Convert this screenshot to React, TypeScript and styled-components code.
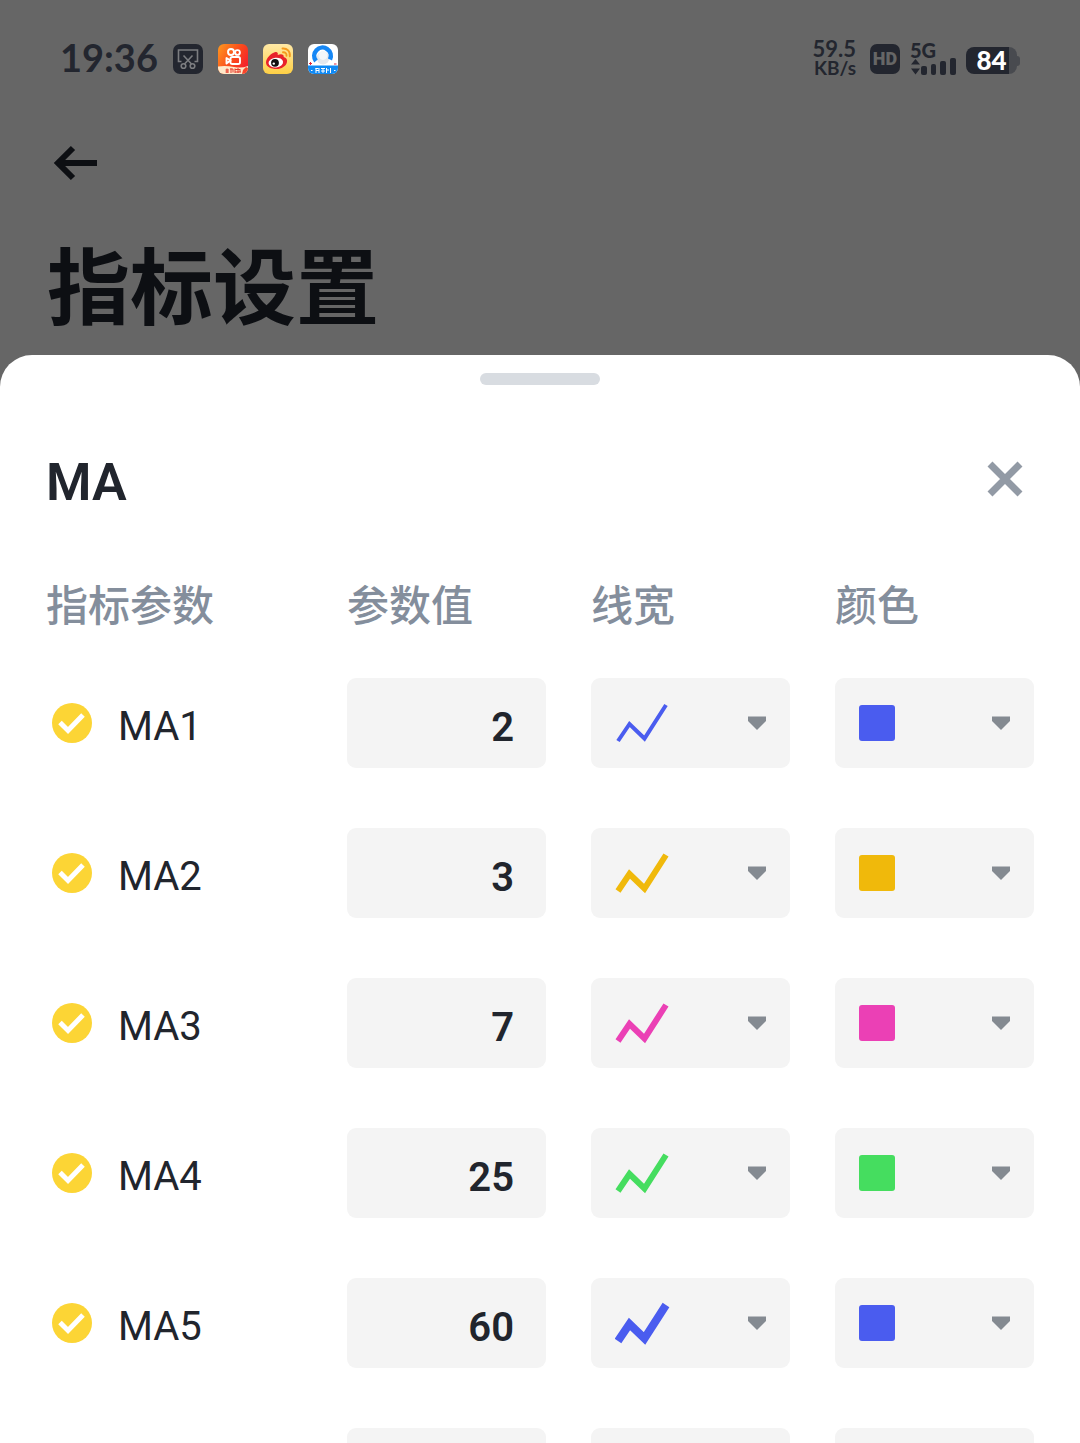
import React, { useState } from "react";
import styled, { createGlobalStyle } from "styled-components";

const INK = "#21252d";
const STATUS = "#23262f";
const LATIN = `Roboto, "Noto Sans CJK SC", sans-serif`;

const GlobalStyle = createGlobalStyle`
  *, *::before, *::after { box-sizing: border-box; }
  body { margin: 0; background: #666666; font-family: ${LATIN}; color: ${INK}; }
`;

const Screen = styled.div`
  display: flex;
  flex-direction: column;
  height: 100vh;
  overflow: hidden;
  background: #666666;
`;

const StatusBar = styled.header`
  display: flex;
  align-items: center;
  justify-content: space-between;
  height: 118px;
  padding: 0 60px;
  color: ${STATUS};
  font-family: Lato, sans-serif;
  font-weight: 700;
`;

const StatusGroup = styled.div<{ $gap: number }>`
  display: flex;
  align-items: center;
  gap: ${(p) => p.$gap}px;
`;

const Clock = styled.time`
  font-size: 38px;
  line-height: 40px;
  padding-bottom: 4px;
`;

const NetSpeed = styled.div`
  display: flex;
  flex-direction: column;
  align-items: flex-end;
  margin-right: 4px;
  padding-bottom: 2px;
`;

const SpeedLine = styled.span<{ $size: number }>`
  font-size: ${(p) => p.$size}px;
  line-height: 19px;
`;

const HdBadge = styled.span`
  display: grid;
  place-items: center;
  width: 30px;
  height: 30px;
  border-radius: 7px;
  background: ${STATUS};
  color: #666666;
  font: 900 18px/30px Roboto, sans-serif;
`;

const Signal = styled.div`
  display: flex;
  flex-direction: column;
  font-size: 20px;
  font-weight: 900;
  line-height: 16px;

  svg { flex: none; }
`;

const Battery = styled.div`
  display: flex;
  align-items: center;
  padding-top: 3px;
`;

const BatteryBody = styled.div`
  width: 51px;
  height: 27px;
  border-radius: 8px;
  background: linear-gradient(90deg, ${STATUS} 84%, #484a4f 84%);
  color: #ffffff;
  font-size: 26px;
  font-weight: 900;
  line-height: 27px;
  text-align: center;
`;

const BatteryTip = styled.div`
  width: 3px;
  height: 10px;
  border-radius: 0 3px 3px 0;
  background: #484a4f;
`;

const PageHead = styled.div`
  display: flex;
  flex-direction: column;
  align-items: flex-start;
  height: 237px;
  padding: 22px 47px 0;
  color: #0d0f13;
`;

const IconButton = styled.button`
  display: grid;
  place-items: center;
  padding: 0;
  border: 0;
  background: none;
  color: inherit;
  cursor: pointer;
`;

const PageTitle = styled.h1`
  margin: 54px 0 0;
  font: 700 83px/84px "Noto Sans CJK SC", sans-serif;
`;

const Sheet = styled.section`
  display: flex;
  flex-direction: column;
  flex: 1;
  min-height: 0;
  overflow: hidden;
  padding: 18px 46px 0;
  border-radius: 32px 32px 0 0;
  background: #ffffff;
`;

const Handle = styled.div`
  align-self: center;
  flex: none;
  width: 120px;
  height: 12px;
  border-radius: 6px;
  background: #d8dce1;
`;

const SheetHead = styled.div`
  display: flex;
  align-items: center;
  justify-content: space-between;
  flex: none;
  height: 60px;
  margin-top: 64px;
  padding-right: 9px;
  color: #929aa5;
`;

const SheetTitle = styled.h2`
  margin: 0;
  padding-top: 8px;
  color: ${INK};
  font-size: 52px;
  font-weight: 600;
  line-height: 60px;
`;

const Table = styled.table`
  display: block;
  margin-top: 64px;
`;

const Head = styled.thead`
  display: block;
`;

const Body = styled.tbody`
  display: grid;
  gap: 60px;
  margin-top: 45px;
`;

const Row = styled.tr`
  display: grid;
  grid-template-columns: 256px 1fr 1fr 1fr;
  column-gap: 45px;
  align-items: center;
`;

const HeadCell = styled.th`
  padding: 0;
  color: #848e9c;
  font: 500 42px/60px "Noto Sans CJK SC", sans-serif;
  text-align: left;
  white-space: nowrap;
`;

const Cell = styled.td`
  display: grid;
  height: 90px;
  padding: 0;
`;

const CheckLabel = styled.label`
  display: flex;
  align-items: center;
  gap: 24px;
  padding-left: 6px;
  font-size: 40px;
  line-height: 48px;
`;

const LabelText = styled.span`
  padding: 8px 0 0 2px;
`;

const CheckWrap = styled.span`
  display: grid;
  width: 40px;
  height: 40px;

  & > * { grid-area: 1 / 1; }
  svg { pointer-events: none; z-index: 1; }
`;

const CheckBox = styled.input`
  appearance: none;
  width: 40px;
  height: 40px;
  margin: 0;
  border-radius: 50%;
  background: #d8dce1;

  &:checked { background: #fcd535; }
`;

const NumberInput = styled.input`
  width: 100%;
  min-width: 0;
  height: 90px;
  padding: 8px 32px 0;
  border: 0;
  border-radius: 9px;
  background: #f4f4f4;
  color: ${INK};
  font: 600 40px/48px ${LATIN};
  text-align: right;
`;

const Picker = styled.div`
  display: grid;
  grid-template-columns: minmax(0, 1fr);
  align-items: center;

  & > * { grid-area: 1 / 1; }
`;

const PickerSelect = styled.select`
  appearance: none;
  width: 100%;
  height: 90px;
  padding: 0 24px;
  border: 0;
  border-radius: 9px;
  background: #f4f4f4;
`;

const PickerFace = styled.span`
  display: flex;
  align-items: center;
  justify-content: space-between;
  padding: 0 24px;
  pointer-events: none;
`;

const Swatch = styled.span<{ $color: string }>`
  width: 36px;
  height: 36px;
  border-radius: 3px;
  background: ${(p) => p.$color};
`;

const SwatchOption = styled.option<{ $color: string }>`
  background: ${(p) => p.$color};
`;

const BLUE = "#4a5cef";
const GOLD = "#f0b90b";
const PINK = "#eb40b5";
const GREEN = "#45dd5f";

const COLORS = [BLUE, GOLD, PINK, GREEN];
const WIDTHS = [4, 6, 8];

type Line = { label: string; value: string; width: number; color: string };

const LINES: Line[] = [
  { label: "MA1", value: "2", width: 4, color: BLUE },
  { label: "MA2", value: "3", width: 6, color: GOLD },
  { label: "MA3", value: "7", width: 6, color: PINK },
  { label: "MA4", value: "25", width: 6, color: GREEN },
  { label: "MA5", value: "60", width: 8, color: BLUE },
];

function ScreenshotIcon() {
  return (
    <svg width="30" height="30" viewBox="0 0 30 30" fill="none" aria-hidden="true">
      <rect width="30" height="30" rx="7" fill={STATUS} />
      <g stroke="#7c7d80" strokeWidth="1.6">
        <path d="M8.500 17.500H5.500V6h19v11.500h-3" />
        <path d="M10.500 11.500l8 8.500M19.500 11.500L11.500 20" />
        <circle cx="10.500" cy="22" r="2.300" />
        <circle cx="19.500" cy="22" r="2.300" />
      </g>
    </svg>
  );
}

function CameraAppIcon() {
  return (
    <svg width="30" height="30" viewBox="0 0 30 30" aria-hidden="true">
      <defs>
        <linearGradient id="cam" x1="0" y1="0" x2="1" y2="0.600">
          <stop offset="0" stopColor="#ff9a1f" />
          <stop offset="0.600" stopColor="#fb4a1c" />
          <stop offset="1" stopColor="#f5232c" />
        </linearGradient>
        <clipPath id="camClip"><rect width="30" height="30" rx="6" /></clipPath>
      </defs>
      <g clipPath="url(#camClip)">
        <rect width="30" height="30" fill="url(#cam)" />
        <path d="M0 22.500Q8 21.500 16 23t14-1v8H0z" fill="#ffe9c9" />
        <path d="M25 26l3-3 2 1v6h-6z" fill="#f8452a" />
        <g fill="none" stroke="#fff" strokeWidth="1.900">
          <circle cx="13" cy="8" r="3" />
          <circle cx="19.500" cy="8.500" r="2.400" />
          <rect x="12.500" y="13" width="9.500" height="7" rx="1.800" />
          <path d="M12.500 16.500L8.500 14v5.500z" strokeLinejoin="round" />
        </g>
        <path d="M9 24.500v4.500M7.500 26h3.500M7.500 28h3.500M13 24.500v4.500M12 25h3v3.500M17 24.500v4.500M17 25.500h5M20 24v5M17 28h6M22 25v3" stroke="#e5392a" strokeWidth="1" fill="none" />
      </g>
    </svg>
  );
}

function EyeAppIcon() {
  return (
    <svg width="30" height="30" viewBox="0 0 30 30" aria-hidden="true">
      <defs>
        <linearGradient id="eye" x1="0" y1="0" x2="0" y2="1">
          <stop offset="0" stopColor="#ffe9a6" />
          <stop offset="1" stopColor="#fdcf45" />
        </linearGradient>
      </defs>
      <rect width="30" height="30" rx="6" fill="url(#eye)" />
      <path d="M3 18.500C3 14 9 8.500 12.500 8c2-.3 2.800 1.200 2.200 3 3-1.300 6.500-1 6 2 2.500.8 3.800 2.500 3.300 5-.8 4.300-5.500 7-10.500 7S3 23 3 18.500z" fill="#e8222b" />
      <ellipse cx="12.800" cy="18.600" rx="7.300" ry="4.900" fill="#fff" transform="rotate(-6 12.800 18.600)" />
      <circle cx="12" cy="18.800" r="3.900" fill="#111" />
      <circle cx="10.800" cy="19.600" r="1.200" fill="#fff" />
      <path d="M19.500 4.500c4.500-.5 8 3 7.300 7.800M20 8.200c2.300-.2 3.800 1.300 3.500 3.600" fill="none" stroke="#f59a1d" strokeWidth="1.900" strokeLinecap="round" />
    </svg>
  );
}

function RingAppIcon() {
  return (
    <svg width="30" height="30" viewBox="0 0 30 30" aria-hidden="true">
      <defs>
        <clipPath id="ringClip"><rect width="30" height="30" rx="6" /></clipPath>
      </defs>
      <g clipPath="url(#ringClip)">
        <rect width="30" height="30" fill="#fff" />
        <circle cx="15" cy="14" r="6.500" fill="#e3e8ee" />
        <path d="M8 17A8.300 8.300 0 1 1 22 15.500" fill="none" stroke="#1687f5" strokeWidth="4.500" />
        <circle cx="15" cy="11.500" r="4.400" fill="#f4f7fa" />
        <rect y="21.500" width="30" height="8.500" fill="#0f8af5" />
        <path d="M2.500 18v3M1 19.500h3M26 20h2.500" stroke="#e3273a" strokeWidth="1" />
        <path d="M3 26.500h1.500M8 24v5M7.500 24.500h3M8 26.500h3M11 24v5M13 24.500h4M13 27h4M15 24v5M18.500 24v5M18 26h3M22.500 24v5M26 26.500h1.500" stroke="#fff" strokeWidth="1" />
      </g>
    </svg>
  );
}

function SignalBars() {
  return (
    <svg width="46" height="18" viewBox="0 0 46 18" fill={STATUS} aria-hidden="true">
      <path d="M5.500 1l4.500 5.500H1zM5.500 16.500L1 10.500h9z" />
      <rect x="11" y="8" width="6" height="9" rx="2" />
      <rect x="21" y="6" width="5" height="11" rx="2" />
      <rect x="30" y="3" width="6" height="14" rx="2" />
      <rect x="40" y="0" width="6" height="17" rx="2" />
    </svg>
  );
}

function BackIcon() {
  return (
    <svg width="56" height="46" viewBox="0 0 56 46" fill="none" stroke="currentColor" strokeWidth="6" aria-hidden="true">
      <path d="M50 23H14M26 8L11 23l15 15" />
    </svg>
  );
}

function CloseIcon() {
  return (
    <svg width="40" height="40" viewBox="0 0 40 40" fill="none" stroke="currentColor" strokeWidth="7" aria-hidden="true">
      <path d="M5 5l30 30M35 5L5 35" />
    </svg>
  );
}

function TickIcon() {
  return (
    <svg width="40" height="40" viewBox="0 0 40 40" fill="none" stroke="#ffffff" strokeWidth="5" aria-hidden="true">
      <path d="M8 19.500l8 8L31 12" />
    </svg>
  );
}

function TrendIcon({ color, width }: { color: string; width: number }) {
  return (
    <svg width="56" height="46" viewBox="0 0 56 46" fill="none" stroke={color} strokeWidth={width} aria-hidden="true">
      <path d="M3 41L14.500 24 29.500 38.500 51 5" />
    </svg>
  );
}

function CaretIcon() {
  return (
    <svg width="18" height="14" viewBox="0 0 18 14" fill="#848a91" aria-hidden="true">
      <path d="M0 .5h18v4.500L9 14 0 5z" />
    </svg>
  );
}

function LineRow({ line }: { line: Line }) {
  const [checked, setChecked] = useState(true);
  const [value, setValue] = useState(line.value);
  const [width, setWidth] = useState(line.width);
  const [color, setColor] = useState(line.color);

  return (
    <Row>
      <Cell>
        <CheckLabel>
          <CheckWrap>
            <CheckBox type="checkbox" checked={checked} onChange={(e) => setChecked(e.target.checked)} />
            {checked && <TickIcon />}
          </CheckWrap>
          <LabelText>{line.label}</LabelText>
        </CheckLabel>
      </Cell>
      <Cell>
        <NumberInput aria-labelledby="col-value" inputMode="numeric" value={value} onChange={(e) => setValue(e.target.value)} />
      </Cell>
      <Cell>
        <Picker>
          <PickerSelect aria-labelledby="col-width" value={width} onChange={(e) => setWidth(Number(e.target.value))}>
            {WIDTHS.map((w) => <option key={w} value={w} />)}
          </PickerSelect>
          <PickerFace>
            <TrendIcon color={color} width={width} />
            <CaretIcon />
          </PickerFace>
        </Picker>
      </Cell>
      <Cell>
        <Picker>
          <PickerSelect aria-labelledby="col-color" value={color} onChange={(e) => setColor(e.target.value)}>
            {COLORS.map((c) => <SwatchOption key={c} value={c} $color={c} />)}
          </PickerSelect>
          <PickerFace>
            <Swatch $color={color} />
            <CaretIcon />
          </PickerFace>
        </Picker>
      </Cell>
    </Row>
  );
}

function EmptyRow() {
  return (
    <Row>
      <Cell />
      <Cell><NumberInput aria-labelledby="col-value" inputMode="numeric" /></Cell>
      <Cell><PickerSelect aria-labelledby="col-width" /></Cell>
      <Cell><PickerSelect aria-labelledby="col-color" /></Cell>
    </Row>
  );
}

export default function App() {
  return (
    <Screen>
      <GlobalStyle />
      <StatusBar>
        <StatusGroup $gap={15}>
          <Clock>19:36</Clock>
          <ScreenshotIcon />
          <CameraAppIcon />
          <EyeAppIcon />
          <RingAppIcon />
        </StatusGroup>
        <StatusGroup $gap={10}>
          <NetSpeed>
            <SpeedLine $size={22}>59.5</SpeedLine>
            <SpeedLine $size={19}>KB/s</SpeedLine>
          </NetSpeed>
          <HdBadge>HD</HdBadge>
          <Signal>
            5G
            <SignalBars />
          </Signal>
          <Battery>
            <BatteryBody>84</BatteryBody>
            <BatteryTip />
          </Battery>
        </StatusGroup>
      </StatusBar>
      <PageHead>
        <IconButton type="button" aria-label="返回"><BackIcon /></IconButton>
        <PageTitle>指标设置</PageTitle>
      </PageHead>
      <Sheet>
        <Handle />
        <SheetHead>
          <SheetTitle>MA</SheetTitle>
          <IconButton type="button" aria-label="关闭"><CloseIcon /></IconButton>
        </SheetHead>
        <Table>
          <Head>
            <Row>
              <HeadCell scope="col">指标参数</HeadCell>
              <HeadCell scope="col" id="col-value">参数值</HeadCell>
              <HeadCell scope="col" id="col-width">线宽</HeadCell>
              <HeadCell scope="col" id="col-color">颜色</HeadCell>
            </Row>
          </Head>
          <Body>
            {LINES.map((line) => <LineRow key={line.label} line={line} />)}
            <EmptyRow />
          </Body>
        </Table>
      </Sheet>
    </Screen>
  );
}
